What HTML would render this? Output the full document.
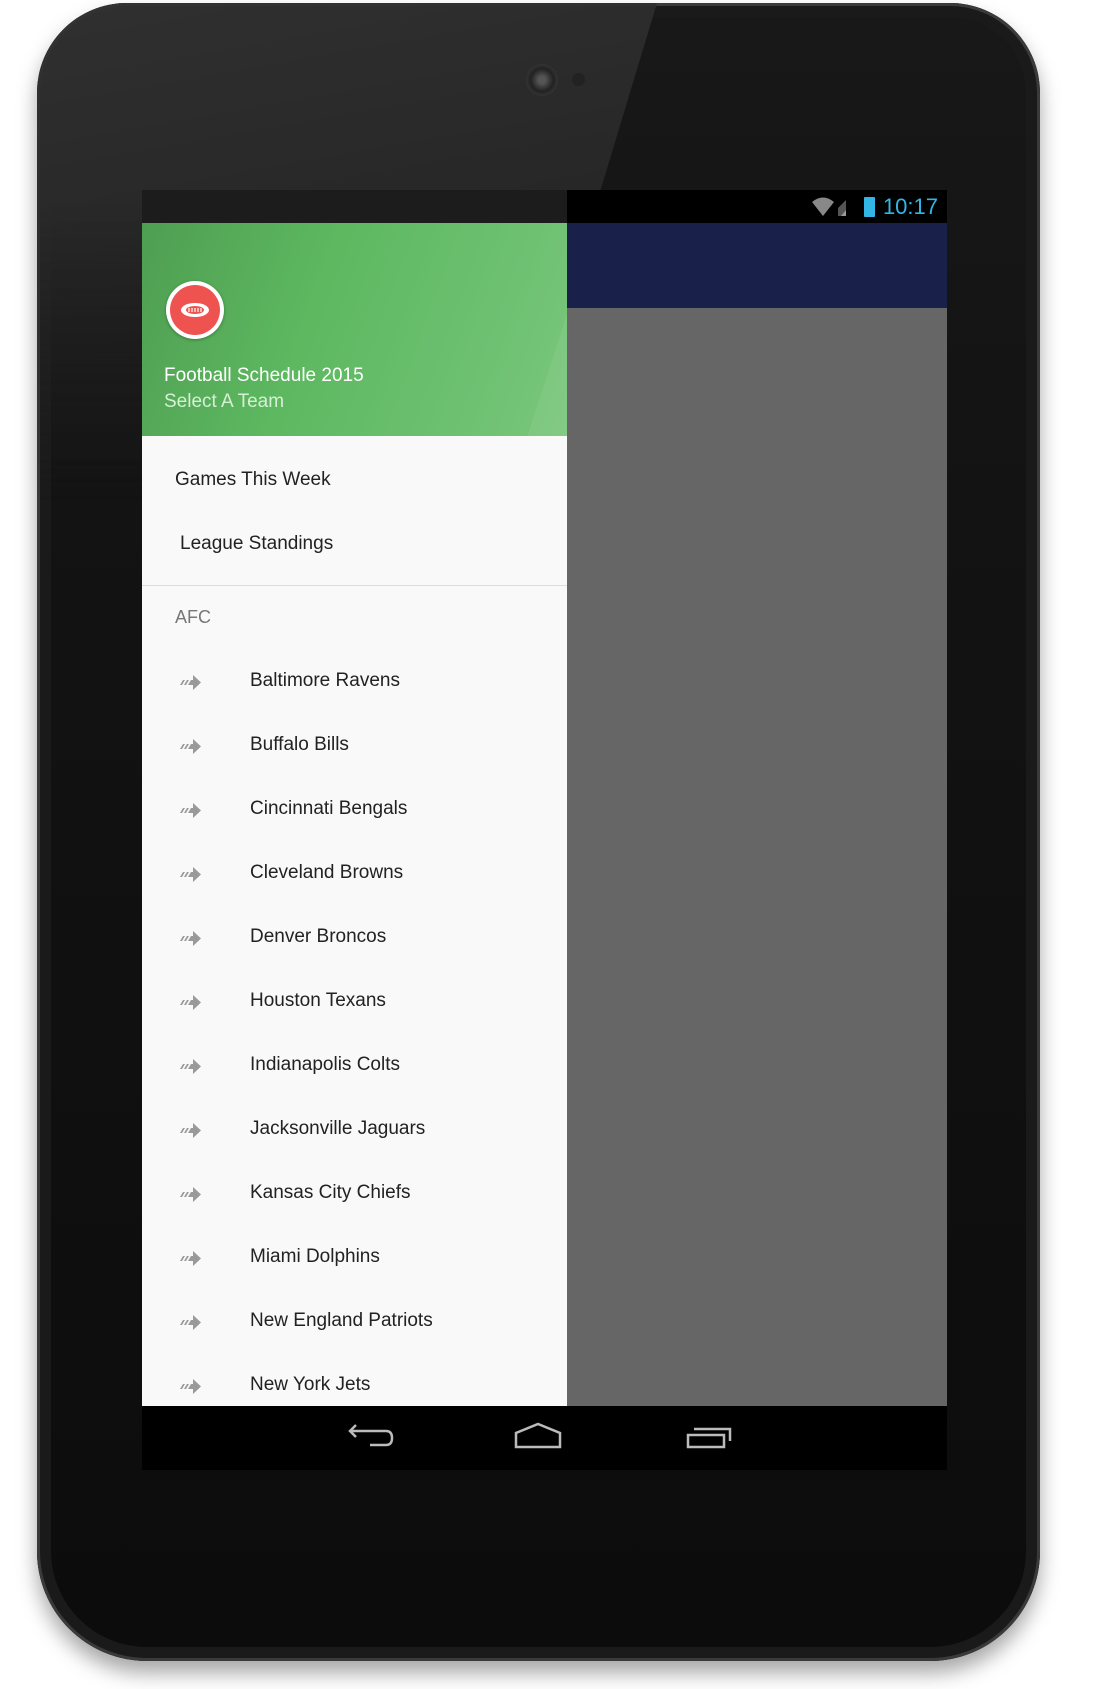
<!DOCTYPE html>
<html><head><meta charset="utf-8"><style>
*{margin:0;padding:0;box-sizing:border-box}
body{width:1094px;height:1689px;background:#fff;position:relative;overflow:hidden;font-family:"Liberation Sans",sans-serif}
.dev{position:absolute;left:37px;top:3px;width:1003px;height:1658px;border-radius:90px 90px 110px 110px;background:linear-gradient(#181818,#131313 30%,#0c0c0c);box-shadow:0 12px 20px rgba(0,0,0,.35),inset 0 0 0 3px #3a3a3a,inset 0 0 0 14px #1a1a1a}
.gloss{position:absolute;left:37px;top:3px;width:1003px;height:1658px;border-radius:90px 90px 110px 110px;overflow:hidden;-webkit-mask-image:linear-gradient(#000 0,#000 12%,transparent 30%);mask-image:linear-gradient(#000 0,#000 12%,transparent 30%)}
.gloss:before{content:"";position:absolute;left:0;top:0;width:1003px;height:1658px;background:linear-gradient(170deg,#333 0%,#262626 20%,#1d1d1d 45%,#141414 100%);clip-path:polygon(0 0,620px 0,120px 1658px,0 1658px);opacity:.9}
.cam{position:absolute;left:526px;top:64px;width:32px;height:32px;border-radius:50%;background:radial-gradient(#555 15%,#222 50%,#333 70%,#111)}
.cam2{position:absolute;left:572px;top:73px;width:13px;height:13px;border-radius:50%;background:#222}
.scr{position:absolute;left:142px;top:190px;width:805px;height:1280px;background:#666;overflow:hidden}
.sb{position:absolute;left:0;top:0;width:805px;height:33px;background:#000}
.sbl{position:absolute;left:0;top:0;width:425px;height:33px;background:#1c1c1c}
.time{position:absolute;right:9px;top:4px;color:#33b5e5;font-size:22px}
.navy{position:absolute;left:425px;top:33px;width:380px;height:85px;background:#19204a}
.drawer{position:absolute;left:0;top:33px;width:425px;height:1183px;background:#f9f9f9}
.hdr{position:absolute;left:0;top:0;width:425px;height:213px;overflow:hidden;background:linear-gradient(110deg,#4f9e52,#5db860 40%,#6cc070 75%,#7ac67c)}
.hdr:after{content:"";position:absolute;left:420px;top:0;width:80px;height:213px;background:rgba(255,255,255,.07);transform:skewX(-18deg)}
.logo{position:absolute;left:24px;top:58px;width:58px;height:58px;border-radius:50%;background:#fff;box-shadow:0 1px 3px rgba(0,0,0,.3)}
.logo i{position:absolute;left:4px;top:4px;width:50px;height:50px;border-radius:50%;background:#ef5350}
.t1{position:absolute;left:22px;top:142px;color:#fff;font-size:19px}
.t2{position:absolute;left:22px;top:168px;color:#d6f0d6;font-size:19px}
.it{position:absolute;font-size:19px;color:#222}
.div{position:absolute;left:0;top:362px;width:425px;height:1px;background:#ddd}
.afc{position:absolute;left:33px;top:384px;font-size:18px;color:#777}
.row{position:absolute;left:0;width:425px;height:30px}
.row svg{position:absolute;left:35px;top:6px}
.row span{position:absolute;left:108px;top:3px;font-size:19px;color:#222}
.nb{position:absolute;left:0;top:1216px;width:805px;height:64px;background:#000}
</style></head><body>
<div class="dev"></div><div class="gloss"></div>
<div class="cam"></div><div class="cam2"></div>
<div class="scr">
<div class="sb"><div class="sbl"></div>
<svg style="position:absolute;left:668px;top:6px" width="50" height="22"><path d="M2 6 Q13 -3 24 6 L13 20 Z" fill="#888"/><path d="M28 20 L28 12 L36 4 L36 20Z" fill="#555"/><path d="M31 20 L36 14 L36 20Z" fill="#999"/></svg>
<div style="position:absolute;left:722px;top:7px;width:11px;height:20px;background:#33b5e5;border-radius:1px"></div>
<div class="time">10:17</div></div>
<div class="navy"></div>
<div class="drawer">
<div class="hdr"><div class="logo"><i></i><svg style="position:absolute;left:14px;top:21px" width="30" height="16"><ellipse cx="15" cy="8" rx="14" ry="7" fill="#fff"/><ellipse cx="15" cy="8" rx="9" ry="4" fill="#ef5350"/><path d="M9 6v4M12 6v4M15 6v4M18 6v4M21 6v4" stroke="#fff" stroke-width="1.2"/></svg></div>
<div class="t1">Football Schedule 2015</div><div class="t2">Select A Team</div></div>
<div class="it" style="left:33px;top:246px">Games This Week</div>
<div class="it" style="left:38px;top:310px">League Standings</div>
<div class="div"></div>
<div class="afc">AFC</div>
<div id="rows"></div>
</div>
<div class="nb">
<svg style="position:absolute;left:206px;top:16px" width="400" height="30">
<path d="M8 3 L2 9 L8 15 M2 9 H38 Q44 9 44 16 Q44 23 38 23 H22" fill="none" stroke="#bbb" stroke-width="2.5"/>
<path d="M168 25 V11 L190 2 L212 11 V25 Z" fill="none" stroke="#bbb" stroke-width="2.5"/>
<path d="M340 13 H376 V25 H340 Z M346 7 H382 V19" fill="none" stroke="#bbb" stroke-width="2.5"/>
</svg></div>
</div>
<script>
var t=["Baltimore Ravens","Buffalo Bills","Cincinnati Bengals","Cleveland Browns","Denver Broncos","Houston Texans","Indianapolis Colts","Jacksonville Jaguars","Kansas City Chiefs","Miami Dolphins","New England Patriots","New York Jets"],h="";
for(var i=0;i<t.length;i++){h+='<div class="row" style="top:'+(444+i*64)+'px"><svg width="26" height="20"><path d="M3 12 L6 7 H8 L5 12Z M7 12 L10 7 H12 L9 12Z M11 12 L14 7 H16 V2 L24 9.5 L16 17 V12Z" fill="#999"/></svg><span>'+t[i]+'</span></div>';}
document.getElementById("rows").innerHTML=h;
</script>
</body></html>
